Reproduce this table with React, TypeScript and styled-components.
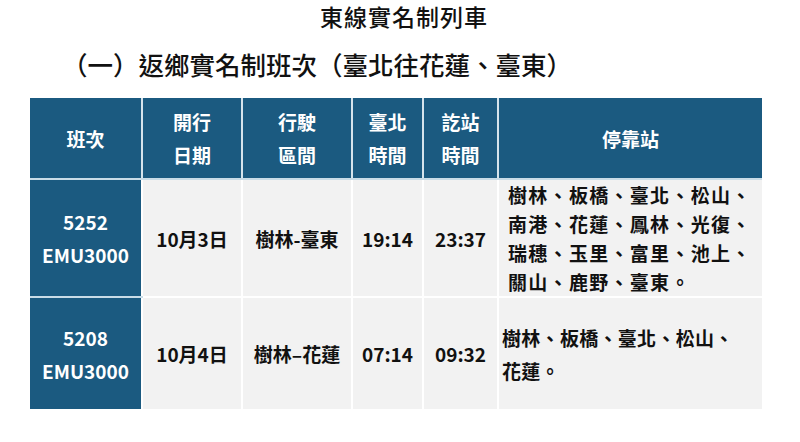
import React from "react";
import styled, { createGlobalStyle } from "styled-components";

const GlobalStyle = createGlobalStyle`
  html, body {
    margin: 0;
    padding: 0;
    background: #ffffff;
  }
  body {
    font-family: "Noto Sans CJK TC", "Noto Sans", sans-serif;
  }
`;

const Page = styled.div`
  width: 800px;
  height: 442px;
  overflow: hidden;
  background: #ffffff;
  display: flex;
  flex-direction: column;
`;

const Title = styled.h1`
  margin: 0;
  height: 34px;
  line-height: 32px;
  text-align: center;
  font-size: 23px;
  font-weight: 500;
  letter-spacing: 1px;
  color: #111;
  padding-left: 8px;
`;

const SubTitle = styled.h2`
  margin: 0;
  height: 64px;
  line-height: 60px;
  padding-left: 62px;
  font-size: 25.5px;
  font-weight: 500;
  color: #111;
`;

const Table = styled.table`
  margin-left: 30px;
  width: 732px;
  border-collapse: collapse;
  table-layout: fixed;
`;

const HeadCell = styled.th<{ $w: number }>`
  width: ${(p) => p.$w}px;
  height: 80px;
  padding: 0;
  background: #1b5a80;
  color: #ffffff;
  font-size: 19px;
  font-weight: 700;
  line-height: 33px;
  text-align: center;
  vertical-align: middle;
  border-left: 2px solid #d6e4ec;
  border-bottom: 2px solid #c9dce7;
  &:first-child {
    border-left: none;
  }
`;

const TrainCell = styled.td`
  padding: 0;
  background: #1b5a80;
  color: #ffffff;
  font-size: 19px;
  font-weight: 700;
  line-height: 33px;
  text-align: center;
  vertical-align: middle;
  border-bottom: 2px solid #c9dce7;
  tr:last-child > & {
    border-bottom: none;
  }
`;

const Cell = styled.td`
  padding: 0;
  background: #f2f2f2;
  color: #111;
  font-size: 19px;
  font-weight: 700;
  text-align: center;
  vertical-align: middle;
  border-left: 2px solid #ffffff;
  border-bottom: 2px solid #ffffff;
  tr:last-child > & {
    border-bottom: none;
  }
`;

const StopsCell = styled(Cell)<{ $pad: number; $spacing: number; $lh: number }>`
  text-align: left;
  padding-left: ${(p) => p.$pad}px;
  letter-spacing: ${(p) => p.$spacing}px;
  line-height: ${(p) => p.$lh}px;
`;

const Row = styled.tr<{ $h: number }>`
  height: ${(p) => p.$h}px;
`;

type Trip = {
  no: string;
  car: string;
  date: string;
  route: string;
  dep: string;
  arr: string;
  stops: string[];
  pad: number;
  spacing: number;
  lh: number;
  h: number;
};

const trips: Trip[] = [
  {
    no: "5252",
    car: "EMU3000",
    date: "10月3日",
    route: "樹林-臺東",
    dep: "19:14",
    arr: "23:37",
    stops: ["樹林、板橋、臺北、松山、", "南港、花蓮、鳳林、光復、", "瑞穗、玉里、富里、池上、", "關山、鹿野、臺東。"],
    pad: 9,
    spacing: 1.3,
    lh: 29,
    h: 118,
  },
  {
    no: "5208",
    car: "EMU3000",
    date: "10月4日",
    route: "樹林–花蓮",
    dep: "07:14",
    arr: "09:32",
    stops: ["樹林、板橋、臺北、松山、", "花蓮。"],
    pad: 3,
    spacing: 0.3,
    lh: 33,
    h: 112,
  },
];

function App() {
  return (
    <Page>
      <GlobalStyle />
      <Title>東線實名制列車</Title>
      <SubTitle>（一）返鄉實名制班次（臺北往花蓮、臺東）</SubTitle>
      <Table>
        <thead>
          <tr>
            <HeadCell $w={111}>班次</HeadCell>
            <HeadCell $w={98}>
              開行
              <br />
              日期
            </HeadCell>
            <HeadCell $w={108}>
              行駛
              <br />
              區間
            </HeadCell>
            <HeadCell $w={69}>
              臺北
              <br />
              時間
            </HeadCell>
            <HeadCell $w={73}>
              訖站
              <br />
              時間
            </HeadCell>
            <HeadCell $w={263}>停靠站</HeadCell>
          </tr>
        </thead>
        <tbody>
          {trips.map((t) => (
            <Row key={t.no} $h={t.h}>
              <TrainCell>
                {t.no}
                <br />
                {t.car}
              </TrainCell>
              <Cell>{t.date}</Cell>
              <Cell>{t.route}</Cell>
              <Cell>{t.dep}</Cell>
              <Cell>{t.arr}</Cell>
              <StopsCell $pad={t.pad} $spacing={t.spacing} $lh={t.lh}>
                {t.stops.map((s, i) => (
                  <React.Fragment key={i}>
                    {s}
                    {i < t.stops.length - 1 && <br />}
                  </React.Fragment>
                ))}
              </StopsCell>
            </Row>
          ))}
        </tbody>
      </Table>
    </Page>
  );
}

export default App;
